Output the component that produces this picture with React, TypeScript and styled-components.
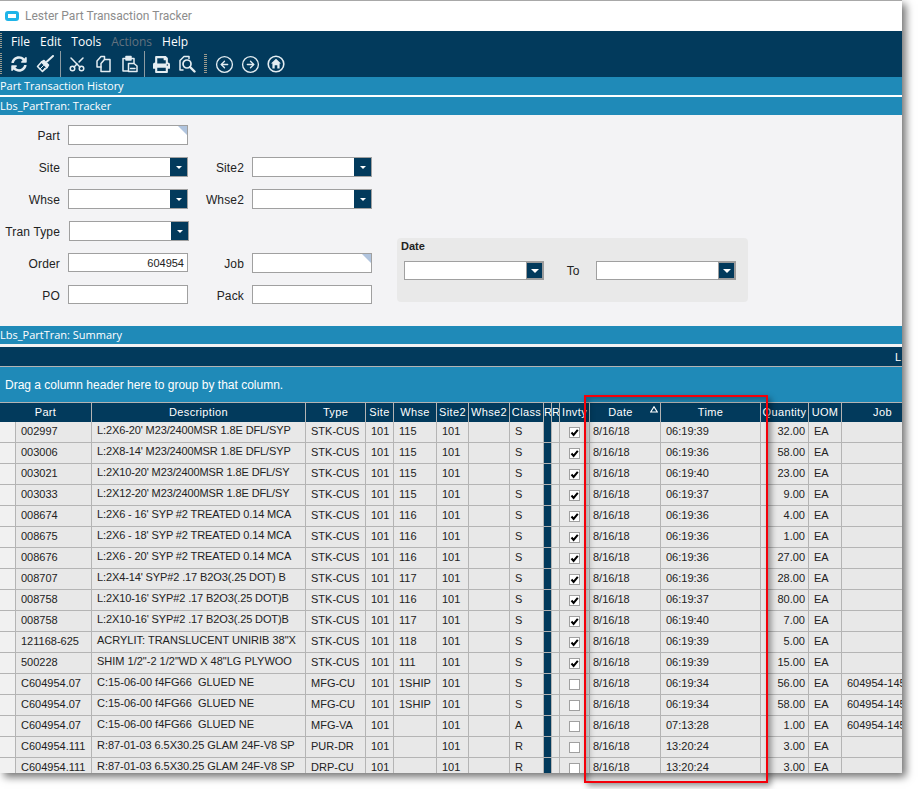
import React from "react";
import styled, { createGlobalStyle } from "styled-components";
import { CircleArrowLeft, CircleArrowRight, Scissors } from "lucide-react";
import { FaPrint, FaSyncAlt } from "react-icons/fa";

const Global = createGlobalStyle`
  html, body { margin: 0; padding: 0; background: #fff; }
  body { width: 918px; height: 789px; overflow: hidden; font-family: "Liberation Sans", Arial, sans-serif; }
  * { box-sizing: border-box; }
`;

const NAVY = "#023a5c";
const BLUE = "#1f8ab8";
const COLS = "16px 76px 214px 60px 28px 43px 32px 41px 34px 8px 8px 30px 71px 100px 48px 33px 82px";

const Page = styled.div`
  position: relative;
  width: 918px;
  height: 789px;
`;
const Win = styled.div`
  width: 902px;
  height: 773px;
  display: flex;
  flex-direction: column;
  background: #fff;
  border-top: 1px solid #a8a8a8;
  box-shadow: 4px 4px 8px rgba(0, 0, 0, 0.55);
  overflow: hidden;
`;
const TitleBar = styled.div`
  height: 30px;
  flex: none;
  display: flex;
  align-items: center;
  padding-left: 5px;
  gap: 6px;
  font: 12px Roboto, sans-serif;
  color: #8c8c8c;
`;
const AppIcon = styled.span`
  width: 14px;
  height: 10px;
  border-radius: 3px;
  border: 3px solid #1fb4e8;
  background: #fff;
  margin-top: -1px;
`;
const MenuBar = styled.div`
  height: 20px;
  flex: none;
  background: ${NAVY};
  display: flex;
  align-items: center;
  padding-left: 11px;
  gap: 10px;
  position: relative;
  font: 12px "Open Sans", sans-serif;
  color: #fff;
`;
const MenuItem = styled.span<{ $off?: boolean }>`
  color: ${(p) => (p.$off ? "#62727f" : "#fff")};
`;
const EdgeGrip = styled.i`
  position: absolute;
  left: 0;
  top: 2px;
  bottom: 2px;
  width: 2px;
  background: repeating-linear-gradient(#9a9a8e 0 1px, transparent 1px 2px);
`;
const ToolBar = styled.div`
  height: 26px;
  flex: none;
  background: ${NAVY};
  display: flex;
  align-items: center;
  padding-left: 6px;
  position: relative;
`;
const Tool = styled.span`
  width: 26px;
  height: 26px;
  flex: none;
  display: flex;
  align-items: center;
  justify-content: center;
  color: #e4edf2;
`;
const ScissorsIcon = styled(Scissors)`
  transform: rotate(-90deg);
`;
const Sep = styled.i`
  width: 1px;
  height: 26px;
  flex: none;
  margin: 0 3px 0 2px;
  background: #8d9ba2;
`;
const Grip = styled.i`
  width: 3px;
  height: 20px;
  flex: none;
  margin: 0 4px;
  background: repeating-linear-gradient(#9a9a8e 0 1px, transparent 1px 2px);
`;
const Band = styled.div<{ $gap?: number }>`
  height: 18px;
  flex: none;
  background: ${BLUE};
  color: #fff;
  font: 11px/18px "Open Sans", sans-serif;
  white-space: nowrap;
  margin-bottom: ${(p) => p.$gap ?? 0}px;
`;
const FormArea = styled.div`
  height: 211px;
  flex: none;
  background: #f3f3f5;
  display: flex;
  align-items: flex-start;
`;
const FormGrid = styled.div`
  width: 372px;
  flex: none;
  padding-top: 10px;
  display: grid;
  grid-template-columns: 60px 8px 120px 56px 8px 120px;
  grid-template-rows: repeat(6, 32px);
`;
const Label = styled.label<{ $col: number; $row: number }>`
  grid-column: ${(p) => p.$col};
  grid-row: ${(p) => p.$row};
  height: 20px;
  padding-top: 2px;
  display: flex;
  align-items: center;
  justify-content: flex-end;
  font-size: 12px;
  letter-spacing: 0.15px;
  color: #222;
  white-space: nowrap;
`;
const Field = styled.div<{ $col: number; $row: number; $h?: number; $shift?: number; $fold?: boolean }>`
  grid-column: ${(p) => p.$col};
  grid-row: ${(p) => p.$row};
  position: relative;
  left: ${(p) => p.$shift ?? 0}px;
  height: ${(p) => p.$h ?? 20}px;
  background: #fff;
  border: 1px solid #a0a0a0;
  display: flex;
  align-items: center;
  justify-content: flex-end;
  font-size: 11px;
  color: #222;
  padding-right: 3px;
  &::after {
    content: "";
    display: ${(p) => (p.$fold ? "block" : "none")};
    position: absolute;
    top: 0;
    right: 0;
    width: 9px;
    height: 9px;
    background: #b0c4de;
    clip-path: polygon(0 0, 100% 0, 100% 100%);
  }
`;
const ComboBtn = styled.span`
  position: absolute;
  top: 0;
  right: 0;
  bottom: 0;
  width: 17px;
  background: ${NAVY};
  display: flex;
  align-items: center;
  justify-content: center;
`;
const Arrow = styled.i`
  width: 0;
  height: 0;
  border-left: 3px solid transparent;
  border-right: 3px solid transparent;
  border-top: 3px solid #fff;
`;
const DatePanel = styled.div`
  width: 351px;
  height: 64px;
  flex: none;
  margin: 123px 0 0 25px;
  background: #e9e9e9;
  border-radius: 4px;
  padding: 2px 4px 0 4px;
`;
const DateLabel = styled.div`
  font: bold 11px/13px "Liberation Sans", sans-serif;
  color: #222;
`;
const DateRow = styled.div`
  display: flex;
  align-items: center;
  margin-top: 8px;
  padding-left: 3px;
`;
const DateCombo = styled.div`
  width: 140px;
  height: 19px;
  flex: none;
  background: #fff;
  border: 1px solid #a0a0a0;
  position: relative;
`;
const DateBtn = styled.span`
  position: absolute;
  top: 0;
  right: -1px;
  bottom: -1px;
  width: 18px;
  background: ${NAVY};
  border: 2px solid #9c9c9c;
  border-left-width: 1px;
  border-top-width: 1px;
  display: flex;
  align-items: center;
  justify-content: center;
`;
const DateArrow = styled(Arrow)`
  border-left-width: 4px;
  border-right-width: 4px;
  border-top-width: 4px;
`;
const ToText = styled.span`
  width: 52px;
  flex: none;
  padding-left: 6px;
  text-align: center;
  font-size: 12px;
  color: #222;
`;
const WhiteGap = styled.div`
  height: 3px;
  flex: none;
  background: #f3f3f3;
`;
const DarkBar = styled.div`
  height: 20px;
  flex: none;
  background: ${NAVY};
  border-bottom: 1px solid #b4b4b4;
  color: #fff;
  font-size: 11px;
  line-height: 20px;
  display: flex;
  justify-content: flex-end;
`;
const Clip = styled.span`
  width: 7px;
  overflow: hidden;
`;
const GroupBar = styled.div`
  height: 35px;
  flex: none;
  background: ${BLUE};
  color: #fff;
  font-size: 12px;
  line-height: 36px;
  padding-left: 5px;
`;
const Grid = styled.div`
  flex: 1;
  min-height: 0;
  overflow: hidden;
  background: #e8e8e8;
`;
const HeaderRow = styled.div`
  display: grid;
  width: 924px;
  grid-template-columns: ${COLS};
  height: 20px;
  background: ${NAVY};
  border-top: 1px solid #b4b4b4;
`;
const HeadCell = styled.div<{ $span?: number; $tight?: boolean; $sort?: boolean }>`
  grid-column: span ${(p) => p.$span ?? 1};
  position: relative;
  border-right: 1px solid #b4b4b4;
  color: #fff;
  font-size: 11px;
  letter-spacing: 0.35px;
  line-height: 18px;
  padding-right: ${(p) => (p.$sort ? 9 : 0)}px;
  text-align: ${(p) => (p.$tight ? "left" : "center")};
  white-space: nowrap;
  overflow: hidden;
`;
const SortMark = styled.svg`
  position: absolute;
  right: 2px;
  top: 3px;
`;
const DataRow = styled.div`
  display: grid;
  width: 924px;
  grid-template-columns: ${COLS};
  height: 21px;
`;
const Cell = styled.div<{ $right?: boolean; $pad?: number; $up?: boolean; $track?: number }>`
  border-right: 1px solid #b4b4b4;
  border-bottom: 1px solid #b4b4b4;
  font-size: 11px;
  line-height: ${(p) => (p.$up ? 16 : 18)}px;
  letter-spacing: ${(p) => p.$track ?? 0}px;
  color: #222;
  white-space: pre;
  overflow: hidden;
  padding: 0 ${(p) => (p.$right ? 3 : 0)}px 0 ${(p) => p.$pad ?? 5}px;
  text-align: ${(p) => (p.$right ? "right" : "left")};
`;
const Indicator = styled(Cell)`
  background: #f1f1f1;
`;
const NavyCell = styled(Cell)`
  background: ${NAVY};
`;
const CheckCell = styled(Cell)`
  display: flex;
  align-items: center;
  justify-content: center;
  padding: 0;
`;
const CheckBox = styled.span`
  width: 11px;
  height: 11px;
  background: #fff;
  border: 1px solid #a0a0a0;
  position: relative;
  display: block;
`;
const CheckMark = styled.svg`
  position: absolute;
  left: -1px;
  top: -1px;
`;
const Highlight = styled.div`
  position: absolute;
  left: 584px;
  top: 395px;
  width: 184px;
  height: 388px;
  border: 2px solid #f4000a;
  box-shadow: 3px 3px 6px rgba(0, 0, 0, 0.4), inset 3px 3px 6px rgba(0, 0, 0, 0.3);
  pointer-events: none;
`;

type R = [string, string, string, string, string, string, string, boolean, string, string, string];
const dLong = "C:15-06-00 f4FG66  GLUED NE";
const dR = "R:87-01-03 6.5X30.25 GLAM 24F-V8 SP";
const rows: R[] = [
  ["002997", "L:2X6-20' M23/2400MSR 1.8E DFL/SYP", "STK-CUS", "101", "115", "101", "S", true, "06:19:39", "32.00", ""],
  ["003006", "L:2X8-14' M23/2400MSR 1.8E DFL/SYP", "STK-CUS", "101", "115", "101", "S", true, "06:19:36", "58.00", ""],
  ["003021", "L:2X10-20' M23/2400MSR 1.8E DFL/SY", "STK-CUS", "101", "115", "101", "S", true, "06:19:40", "23.00", ""],
  ["003033", "L:2X12-20' M23/2400MSR 1.8E DFL/SY", "STK-CUS", "101", "115", "101", "S", true, "06:19:37", "9.00", ""],
  ["008674", "L:2X6 - 16' SYP #2 TREATED 0.14 MCA", "STK-CUS", "101", "116", "101", "S", true, "06:19:36", "4.00", ""],
  ["008675", "L:2X6 - 18' SYP #2 TREATED 0.14 MCA", "STK-CUS", "101", "116", "101", "S", true, "06:19:36", "1.00", ""],
  ["008676", "L:2X6 - 20' SYP #2 TREATED 0.14 MCA", "STK-CUS", "101", "116", "101", "S", true, "06:19:36", "27.00", ""],
  ["008707", "L:2X4-14' SYP#2 .17 B2O3(.25 DOT) B", "STK-CUS", "101", "117", "101", "S", true, "06:19:36", "28.00", ""],
  ["008758", "L:2X10-16' SYP#2 .17 B2O3(.25 DOT)B", "STK-CUS", "101", "116", "101", "S", true, "06:19:37", "80.00", ""],
  ["008758", "L:2X10-16' SYP#2 .17 B2O3(.25 DOT)B", "STK-CUS", "101", "117", "101", "S", true, "06:19:40", "7.00", ""],
  ["121168-625", "ACRYLIT: TRANSLUCENT UNIRIB 38\"X", "STK-CUS", "101", "118", "101", "S", true, "06:19:39", "5.00", ""],
  ["500228", "SHIM 1/2\"-2 1/2\"WD X 48\"LG PLYWOO", "STK-CUS", "101", "111", "101", "S", true, "06:19:39", "15.00", ""],
  ["C604954.07", dLong, "MFG-CU", "101", "1SHIP", "101", "S", false, "06:19:34", "56.00", "604954-145"],
  ["C604954.07", dLong, "MFG-CU", "101", "1SHIP", "101", "S", false, "06:19:34", "58.00", "604954-145"],
  ["C604954.07", dLong, "MFG-VA", "101", "", "101", "A", false, "07:13:28", "1.00", "604954-145"],
  ["C604954.111", dR, "PUR-DR", "101", "", "101", "R", false, "13:20:24", "3.00", ""],
  ["C604954.111", dR, "DRP-CU", "101", "", "101", "R", false, "13:20:24", "3.00", ""],
];

const trackOf = (d: string) => (d.startsWith("L:") ? -0.12 : d.startsWith("R:") ? -0.05 : 0);

const ic = { fill: "none", stroke: "currentColor", strokeWidth: 1.5, strokeLinejoin: "round" as const, strokeLinecap: "round" as const };

const BroomIcon = () => (
  <svg width="18" height="18" viewBox="0 0 18 18" {...ic}>
    <path d="M17 1 11 6.5" strokeWidth={2} />
    <path d="M8 5.5 12.5 10 11 12.5 5.5 7Z" fill="currentColor" />
    <path d="M5.5 7 1.5 11.5 6.5 16.5 11 12.5" />
    <path d="M4 14 7.5 10.5M6.5 16 9 13" strokeWidth={1} />
  </svg>
);
const CopyIcon = () => (
  <svg width="17" height="18" viewBox="0 0 17 18" {...ic}>
    <path d="M6 12H2V6l4-4.5h3.5V4" />
    <path d="M6 8.5 9.5 4.5H15V16.5H6Z" />
  </svg>
);
const PasteIcon = () => (
  <svg width="17" height="18" viewBox="0 0 17 18" {...ic}>
    <path d="M7 16H2V3.5h3M10 3.5h3V8" />
    <path d="M5 1.5h5v3.5H5Z" fill="currentColor" />
    <path d="M7.5 8.5H13l3 2.5v5.5H7.5Z" />
    <path d="M9.5 13.5h4.5" />
  </svg>
);
const SearchDocIcon = () => (
  <svg width="18" height="18" viewBox="0 0 18 18" {...ic}>
    <path d="M5 15H2V5.5L6 1.5h5v2" />
    <circle cx="9" cy="9" r="4" strokeWidth={1.7} />
    <path d="M12 12 16.5 16.5" strokeWidth={2.4} />
  </svg>
);
const HomeIcon = () => (
  <svg width="18" height="18" viewBox="0 0 18 18">
    <circle cx="9" cy="9" r="7.8" fill="none" stroke="currentColor" strokeWidth="1.6" />
    <path d="M9 3.8 14 8.4H12.6V13.4H10.3V10.2H7.7V13.4H5.4V8.4H4Z" fill="currentColor" />
  </svg>
);

const Combo = ({ col, row, shift }: { col: number; row: number; shift?: number }) => (
  <Field $col={col} $row={row} $shift={shift}>
    <ComboBtn>
      <Arrow />
    </ComboBtn>
  </Field>
);

const heads: [string, number?, boolean?][] = [
  ["Part", 2], ["Description"], ["Type"], ["Site"], ["Whse"], ["Site2"], ["Whse2"], ["Class"],
  ["R", 1, true], ["R", 1, true], ["Invty"], ["Date"], ["Time"], ["Quantity"], ["UOM"], ["Job"],
];

export default function App() {
  return (
    <Page>
      <Global />
      <Win>
        <TitleBar>
          <AppIcon />
          <span>Lester Part Transaction Tracker</span>
        </TitleBar>
        <MenuBar>
          <EdgeGrip />
          <MenuItem>File</MenuItem>
          <MenuItem>Edit</MenuItem>
          <MenuItem>Tools</MenuItem>
          <MenuItem $off>Actions</MenuItem>
          <MenuItem>Help</MenuItem>
        </MenuBar>
        <ToolBar>
          <EdgeGrip />
          <Tool><FaSyncAlt size={16} /></Tool>
          <Tool><BroomIcon /></Tool>
          <Sep />
          <Tool><ScissorsIcon size={18} strokeWidth={2} /></Tool>
          <Tool><CopyIcon /></Tool>
          <Tool><PasteIcon /></Tool>
          <Sep />
          <Tool><FaPrint size={17} /></Tool>
          <Tool><SearchDocIcon /></Tool>
          <Grip />
          <Tool><CircleArrowLeft size={19} strokeWidth={1.7} /></Tool>
          <Tool><CircleArrowRight size={19} strokeWidth={1.7} /></Tool>
          <Tool><HomeIcon /></Tool>
        </ToolBar>
        <Band $gap={2}>Part Transaction History</Band>
        <Band>Lbs_PartTran: Tracker</Band>
        <FormArea>
          <FormGrid>
            <Label $col={1} $row={1}>Part</Label>
            <Field $col={3} $row={1} $fold />
            <Label $col={1} $row={2}>Site</Label>
            <Combo col={3} row={2} />
            <Label $col={4} $row={2}>Site2</Label>
            <Combo col={6} row={2} />
            <Label $col={1} $row={3}>Whse</Label>
            <Combo col={3} row={3} />
            <Label $col={4} $row={3}>Whse2</Label>
            <Combo col={6} row={3} />
            <Label $col={1} $row={4}>Tran Type</Label>
            <Combo col={3} row={4} shift={1} />
            <Label $col={1} $row={5}>Order</Label>
            <Field $col={3} $row={5} $h={19}>604954</Field>
            <Label $col={4} $row={5}>Job</Label>
            <Field $col={6} $row={5} $fold />
            <Label $col={1} $row={6}>PO</Label>
            <Field $col={3} $row={6} $h={19} />
            <Label $col={4} $row={6}>Pack</Label>
            <Field $col={6} $row={6} $h={19} />
          </FormGrid>
          <DatePanel>
            <DateLabel>Date</DateLabel>
            <DateRow>
              <DateCombo><DateBtn><DateArrow /></DateBtn></DateCombo>
              <ToText>To</ToText>
              <DateCombo><DateBtn><DateArrow /></DateBtn></DateCombo>
            </DateRow>
          </DatePanel>
        </FormArea>
        <Band>Lbs_PartTran: Summary</Band>
        <WhiteGap />
        <DarkBar><Clip>L</Clip></DarkBar>
        <GroupBar>Drag a column header here to group by that column.</GroupBar>
        <Grid>
          <HeaderRow>
            {heads.map(([t, span, tight], i) => (
              <HeadCell key={i} $span={span} $tight={tight} $sort={t === "Date"}>
                {t}
                {t === "Date" && (
                  <SortMark width="8" height="7" viewBox="0 0 8 7">
                    <path d="M4 .8 7.3 6H.7Z" fill="none" stroke="#fff" strokeWidth="1.2" />
                  </SortMark>
                )}
              </HeadCell>
            ))}
          </HeaderRow>
          {rows.map((r, i) => (
            <DataRow key={i}>
              <Indicator />
              <Cell>{r[0]}</Cell>
              <Cell $up $track={trackOf(r[1])}>{r[1]}</Cell>
              <Cell>{r[2]}</Cell>
              <Cell>{r[3]}</Cell>
              <Cell>{r[4]}</Cell>
              <Cell>{r[5]}</Cell>
              <Cell />
              <Cell>{r[6]}</Cell>
              <NavyCell />
              <Cell />
              <CheckCell>
                <CheckBox>
                  {r[7] && (
                    <CheckMark width="11" height="11" viewBox="0 0 11 11">
                      <path d="M2.5 5.5 4.6 8 8.8 2.8" fill="none" stroke="#000" strokeWidth="2" />
                    </CheckMark>
                  )}
                </CheckBox>
              </CheckCell>
              <Cell $pad={3}>8/16/18</Cell>
              <Cell>{r[8]}</Cell>
              <Cell $right>{r[9]}</Cell>
              <Cell>EA</Cell>
              <Cell>{r[10]}</Cell>
            </DataRow>
          ))}
        </Grid>
      </Win>
      <Highlight />
    </Page>
  );
}
